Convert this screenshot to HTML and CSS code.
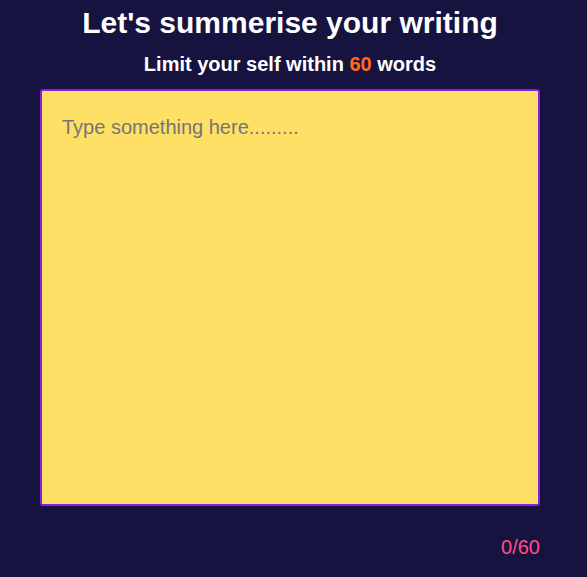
FILE: index.html
```html
<!DOCTYPE html>
<html>
<head>
<meta charset="utf-8">
<link rel="stylesheet" href="styles.css">
</head>
<body>
<main class="app">
  <h1 class="title">Let's summerise your writing</h1>
  <p class="subtitle">Limit your self within <span class="limit">60</span> words</p>
  <textarea class="editor" placeholder="Type something here........."></textarea>
  <div class="counter">0/60</div>
</main>
</body>
</html>
```
FILE: styles.css
```css
html, body {
  margin: 0;
  padding: 0;
  background: #161340;
  height: 100%;
}
body {
  font-family: "Liberation Sans", Arial, sans-serif;
}
.app {
  width: 500px;
  margin-left: 40px;
  display: flex;
  flex-direction: column;
}
.title {
  margin: 5px 0 0;
  font-size: 30px;
  font-weight: bold;
  color: #ffffff;
  text-align: center;
  line-height: 36px;
}
.subtitle {
  margin: 11px 0 0;
  font-size: 20px;
  font-weight: bold;
  color: #ffffff;
  text-align: center;
  line-height: 24px;
}
.limit {
  color: #ff6a1c;
}
.editor {
  box-sizing: border-box;
  margin-top: 13px;
  width: 500px;
  height: 417px;
  background: #ffe066;
  border: 2px solid #8b1ee0;
  border-radius: 3px;
  padding: 24px 20px;
  font-family: "Liberation Sans", Arial, sans-serif;
  font-size: 20px;
  line-height: 24px;
  color: #333;
  resize: none;
  outline: none;
}
.editor::placeholder {
  color: #757575;
}
.counter {
  margin-top: 29px;
  text-align: right;
  font-size: 20px;
  line-height: 24px;
  color: #ff4f84;
}
```
